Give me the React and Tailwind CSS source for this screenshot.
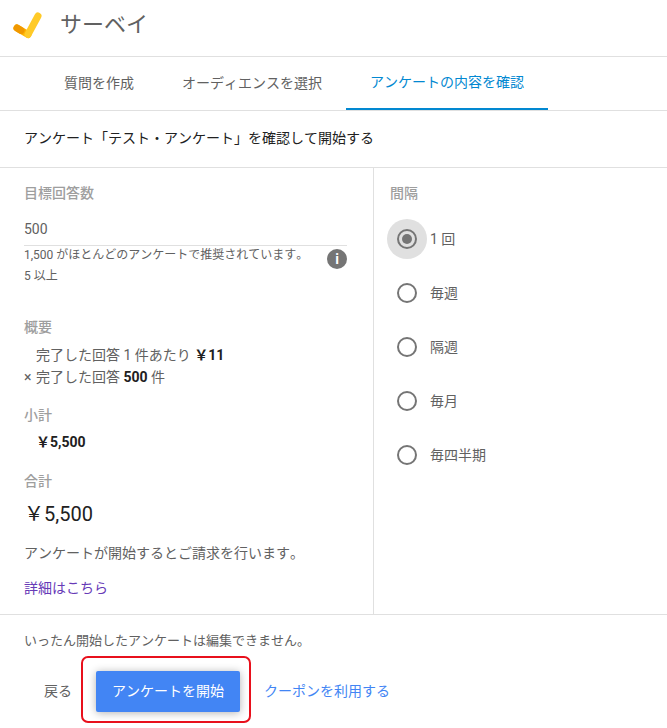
export default function App() {
  const font = { fontFamily: 'Roboto, "Noto Sans CJK JP", sans-serif' };
  const Radio = ({ label, checked }) => (
    <div className="flex h-[54px] items-center">
      <div className={`flex h-10 w-10 shrink-0 items-center justify-center rounded-full ${checked ? "bg-[#e0e0e0]" : ""}`}>
        <div className="flex h-5 w-5 items-center justify-center rounded-full border-2 border-[#757575]">
          {checked && <div className="h-2.5 w-2.5 rounded-full bg-[#757575]" />}
        </div>
      </div>
      <span className="ml-[3px] text-[14px] text-[#616161]">{label}</span>
    </div>
  );
  const Label = ({ children, className = "" }) => (
    <div className={`text-[14px] font-medium leading-5 text-[#9e9e9e] ${className}`}>{children}</div>
  );
  return (
    <div style={font} className="flex h-[728px] w-[667px] flex-col overflow-hidden bg-white [font-kerning:none]">
      <header className="flex h-[57px] shrink-0 items-center border-b border-[#e0e0e0] pb-[6px]">
        <svg className="ml-[12px]" width="34" height="34" viewBox="0 0 34 34">
          <path d="M5 20 L16 26.5" stroke="#ffb300" strokeWidth="7" strokeLinecap="round" />
          <path d="M5 20 L9 22.4" stroke="#f09800" strokeWidth="7" strokeLinecap="round" />
          <path d="M16 26.5 L26 8" stroke="#ffca28" strokeWidth="7" strokeLinecap="round" />
        </svg>
        <div className="ml-[14px] text-[22px] leading-8 text-[#616161]">サーベイ</div>
      </header>

      <nav className="flex h-[54px] shrink-0 border-b border-[#e0e0e0] pl-[40px] text-[14px] text-[#616161]">
        <div className="flex h-full items-center px-6">質問を作成</div>
        <div className="flex h-full items-center px-6">オーディエンスを選択</div>
        <div className="flex h-full items-center border-b-2 border-[#0288d1] px-6 text-[#0288d1]">アンケートの内容を確認</div>
      </nav>

      <div className="flex h-[57px] shrink-0 items-center border-b border-[#e0e0e0] px-6 pb-px text-[14px] text-[#212121]">
        アンケート「テスト・アンケート」を確認して開始する
      </div>

      <main className="flex h-[447px] shrink-0 border-b border-[#e0e0e0]">
        <section className="w-[374px] shrink-0 border-r border-[#e0e0e0] pl-6 pr-[26px] pt-[15px]">
          <Label>目標回答数</Label>
          <div className="mt-[16px] border-b border-[#e0e0e0] pb-[6px] text-[14px] leading-5 text-[#616161]">500</div>
          <div className="relative">
            <div className="mt-[1px] text-[12px] leading-4 text-[#616161]">1,500 がほとんどのアンケートで推奨されています。</div>
            <div className="mt-[5px] text-[12px] leading-4 text-[#616161]">5 以上</div>
            <div className="absolute right-0 top-[2px] flex h-5 w-5 items-center justify-center rounded-full bg-[#757575] text-[14px] font-bold leading-none text-white">i</div>
          </div>
          <Label className="mt-[33px]">概要</Label>
          <div className="mt-[8px] pl-3 text-[14px] leading-5 text-[#616161]">
            完了した回答 1 件あたり <b className="text-[#212121]">￥11</b>
          </div>
          <div className="mt-[2px] text-[14px] leading-5 text-[#616161]">
            × <span className="ml-px">完了した回答</span> <b className="text-[#212121]">500</b> 件
          </div>
          <Label className="mt-[18px]">小計</Label>
          <div className="mt-[7px] pl-3 text-[14px] font-bold leading-5 text-[#212121]">￥5,500</div>
          <Label className="mt-[19px]">合計</Label>
          <div className="mt-[9px] text-[20px] leading-7 text-[#212121]">￥5,500</div>
          <div className="mt-[15px] text-[14px] leading-5 text-[#616161]">アンケートが開始するとご請求を行います。</div>
          <div className="mt-[15px] text-[14px] leading-5 text-[#673ab7]">詳細はこちら</div>
        </section>
        <section className="flex-1 pl-[13px] pt-[15px]">
          <Label className="pl-[3px]">間隔</Label>
          <div className="mt-[9px]">
            <Radio label="1 回" checked />
            <Radio label="毎週" />
            <Radio label="隔週" />
            <Radio label="毎月" />
            <Radio label="毎四半期" />
          </div>
        </section>
      </main>

      <footer className="px-6 pt-[16px]">
        <div className="text-[13px] leading-5 text-[#616161]">いったん開始したアンケートは編集できません。</div>
        <div className="mt-[20px] flex items-center">
          <div className="ml-5 text-[14px] text-[#616161]">戻る</div>
          <div className="relative ml-[24px]">
            <div className="flex h-[41px] w-[144px] items-center justify-center rounded-[2px] bg-[#4285f4] text-[14px] text-white shadow-[0_1px_8px_rgba(0,0,0,0.3)]">
              アンケートを開始
            </div>
            <div className="absolute -bottom-[11px] -left-[15px] -right-[11px] -top-[15px] rounded-[7px] border-2 border-[#e8101c]" />
          </div>
          <div className="ml-[24px] text-[14px] text-[#4285f4]">クーポンを利用する</div>
        </div>
      </footer>
    </div>
  );
}
